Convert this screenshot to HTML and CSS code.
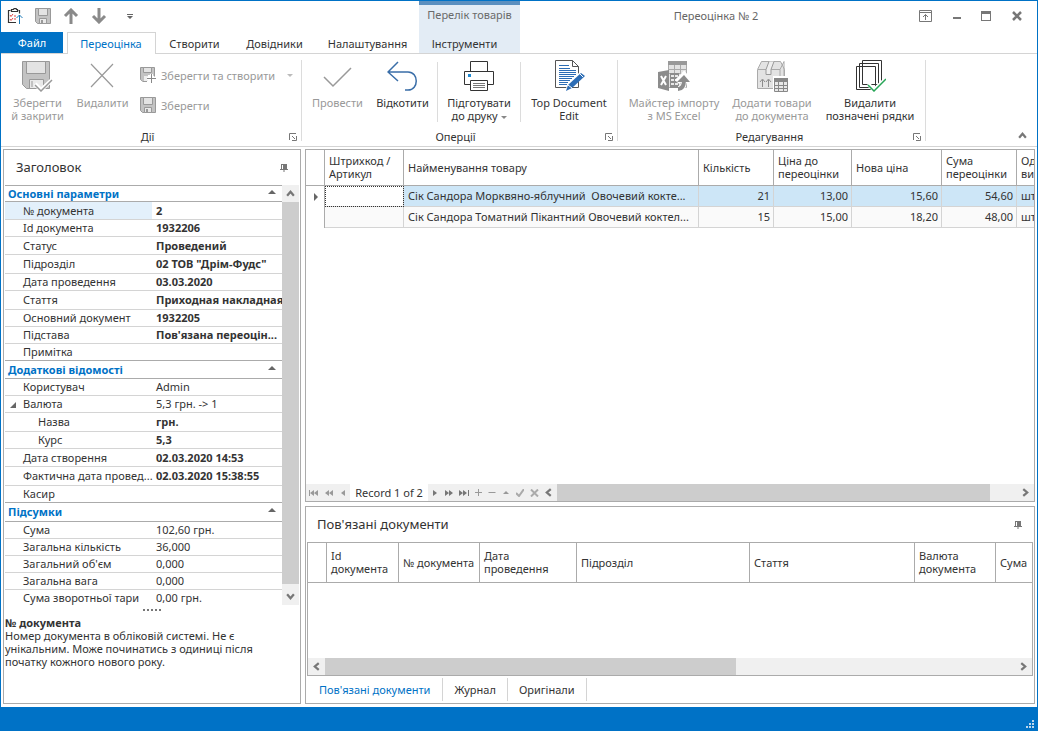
FILE: index.html
```html
<!DOCTYPE html>
<html lang="uk">
<head>
<meta charset="utf-8">
<title>Переоцінка № 2</title>
<link rel="stylesheet" href="styles.css">
</head>
<body>
<svg class="defs" aria-hidden="true">
  <symbol id="launcher" viewBox="0 0 8 8"><path d="M.5 7V.5H7M3 3l3 3M7.500 3v4.500H3" fill="none" stroke="#777"/></symbol>
  <symbol id="pin" viewBox="0 0 8 8"><path d="M1 0h6v5h1v1H4.500v2h-1V6H0V5h1zM2 1v4h1V1z" fill="#777" fill-rule="evenodd"/></symbol>
  <symbol id="floppy" viewBox="0 0 16 16"><path d="M.5.5h15v15h-13l-2-2z" fill="#c3c3c3" stroke="#999"/><path d="M3.500.500h9v7h-9z" fill="#e3e3e3" stroke="#999"/><path d="M4.500 10.500h7v5h-7z" fill="#e9e9e9" stroke="#999"/><path d="M6 12h2v3H6z" fill="#999"/></symbol>
  <symbol id="left" viewBox="0 0 8 8"><path d="M6 1L2.500 4 6 7" fill="none" stroke="#777" stroke-width="2"/></symbol>
  <symbol id="right" viewBox="0 0 8 8"><path d="M2 1l3.500 3L2 7" fill="none" stroke="#777" stroke-width="2"/></symbol>
  <symbol id="up" viewBox="0 0 8 8"><path d="M1 6l3-3.500L7 6" fill="none" stroke="#777" stroke-width="2"/></symbol>
  <symbol id="down" viewBox="0 0 8 8"><path d="M1 2l3 3.500L7 2" fill="none" stroke="#777" stroke-width="2"/></symbol>
</svg>
<div class="window">
  <header class="titlebar">
    <div class="quick">
      <button class="ib" aria-label="Документ"><svg width="16" height="16" viewBox="0 0 16 16"><path d="M9 14.500H1.500v-12h2m8 0h1v3M4.500 1.500h2c0-1.500 3-1.500 3 0h1v2h-6z" fill="none" stroke="#333" stroke-width="1.200"/><path d="M3 7l1 1.500L6 6M3 11l1 1.500L6 10M7 8h2M7 11h2" fill="none" stroke="#e04343"/><path d="M12.500 16V7M9.500 10l3-3 3 3" fill="none" stroke="#1e7bb8"/></svg></button>
      <button class="ib" aria-label="Зберегти документ"><svg width="16" height="16"><use href="#floppy"/></svg></button>
      <button class="ib" aria-label="Попередній"><svg width="16" height="16" viewBox="0 0 16 16"><path d="M8 16V3M2 8l6-6 6 6" fill="none" stroke="#8a8a8a" stroke-width="3"/></svg></button>
      <button class="ib" aria-label="Наступний"><svg width="16" height="16" viewBox="0 0 16 16"><path d="M8 0v13M2 8l6 6 6-6" fill="none" stroke="#8a8a8a" stroke-width="3"/></svg></button>
      <button class="ib more" aria-label="Налаштувати панель"><svg width="6" height="5" viewBox="0 0 6 5"><path d="M0 0h6v1H0zM0 2h6L3 5z" fill="#666"/></svg></button>
    </div>
    <div class="context">Перелік товарів</div>
    <h1 class="title">Переоцінка № 2</h1>
    <div class="sys">
      <button class="ib" aria-label="Параметри стрічки"><svg width="13" height="12" viewBox="0 0 13 12"><path d="M.5.500h12v11H.500zM1 2.500h11M6.500 10V4.500M4 7l2.500-2.500L9 7" fill="none" stroke="#777"/></svg></button>
      <button class="ib" aria-label="Згорнути"><svg width="8" height="12" viewBox="0 0 8 12"><path d="M0 7h8v2H0z" fill="#777"/></svg></button>
      <button class="ib" aria-label="Розгорнути"><svg width="10" height="10" viewBox="0 0 10 10"><path d="M0 0h10v10H0zM1 3v6h8V3z" fill="#777" fill-rule="evenodd"/></svg></button>
      <button class="ib" aria-label="Закрити"><svg width="10" height="10" viewBox="0 0 10 10"><path d="M1 1l8 8M9 1L1 9" stroke="#777" stroke-width="2.500"/></svg></button>
    </div>
  </header>
  <nav class="tabs">
    <button class="tab file">Файл</button>
    <button class="tab active">Переоцінка</button>
    <button class="tab create">Створити</button>
    <button class="tab refs">Довідники</button>
    <button class="tab setup">Налаштування</button>
    <button class="tab tools">Інструменти</button>
  </nav>
  <section class="ribbon">
    <div class="group actions">
      <div class="cmds">
        <button class="big off w65"><svg width="32" height="32" viewBox="0 0 32 32"><path d="M.5 1.500h27v27h-23l-4-4z" fill="#c3c3c3" stroke="#999"/><path d="M4.500 1.500h19v12h-19z" fill="#e3e3e3" stroke="#999"/><path d="M7.500 19.500h14v9h-14z" fill="#e9e9e9" stroke="#999"/><path d="M10 21v6" stroke="#999"/><path d="M13 24l6 6 12-11" fill="none" stroke="#fff" stroke-width="4"/><path d="M13 25l6 6 11-11" fill="none" stroke="#999" stroke-width="1.500"/></svg><span>Зберегти<br>й закрити</span></button>
        <button class="big off w65"><svg width="32" height="32" viewBox="0 0 32 32"><path d="M4 4l22 23M26 4L4 27" stroke="#999" stroke-width="1.200"/></svg><span>Видалити</span></button>
        <div class="smalls">
          <button class="small off"><svg width="16" height="16" viewBox="0 0 16 16"><path d="M.5.500h14v9M7 14.500H3l-2.500-2V.500" fill="#c3c3c3" stroke="#999"/><path d="M1 1h13v7H8v6H3l-2-2z" fill="#c3c3c3"/><path d="M3.500.500h8v5h-8z" fill="#e3e3e3" stroke="#999"/><path d="M4 9h4v5H4z" fill="#eee"/><path d="M11.500 7v9M7 11.500h9" stroke="#fff" stroke-width="3"/><path d="M11.500 7v9M7 11.500h9" stroke="#888"/></svg><span>Зберегти та створити</span><i class="caret"></i></button>
          <button class="small off"><svg width="16" height="16"><use href="#floppy"/></svg><span>Зберегти</span></button>
        </div>
      </div>
      <div class="caption">Дії</div>
      <button class="ib launch" aria-label="Дії: параметри"><svg width="8" height="8"><use href="#launcher"/></svg></button>
    </div>
    <div class="group ops">
      <div class="cmds">
        <button class="big off w65"><svg width="32" height="32" viewBox="0 0 32 32"><path d="M2 17l9 9L29 8" fill="none" stroke="#999" stroke-width="1.500"/></svg><span>Провести</span></button>
        <button class="big w65"><svg width="32" height="32" viewBox="0 0 32 32"><path d="M11 2L1 12l10 9M1 12h20c11 0 11 18 0 18h-3" fill="none" stroke="#3a6ea8" stroke-width="1.500"/></svg><span>Відкотити</span></button>
        <hr class="sep wide">
        <button class="big w81"><svg width="32" height="32" viewBox="0 0 32 32"><path d="M7.500 1.500h17v10h-17zM1.500 11.500h29v13h-29z" fill="#fff" stroke="#333"/><path d="M5 14h3v3H5z" fill="#1e88d0"/><path d="M7.500 20.500h17v10h-17z" fill="#fff" stroke="#333"/><path d="M10 23.500h12M10 25.500h12M10 27.500h12" stroke="#777"/></svg><span>Підготувати<br>до друку <i class="caret"></i></span></button>
        <hr class="sep">
        <button class="big w95"><svg width="32" height="32" viewBox="0 0 32 32"><path d="M2.500.500h17l6 6v21h-23z" fill="#fff" stroke="#555"/><path d="M19.500.500v6h6" fill="none" stroke="#555"/><path d="M6 5.500h10M6 8.500h11M6 10.500h17M6 12.500h17M6 14.500h17M6 16.500h15M6 18.500h13M6 20.500h11M6 22.500h9M6 24.500h8" stroke="#2d6db5"/><path d="M12 31l3-8 13-12 4 4-13 12z" fill="#fff"/><path d="M13 31l2-6 13-12 4 3-13 12z" fill="#2d6db5"/><path d="M26 13l4 4M15 25l4 3" stroke="#fff"/></svg><span>Top Document<br>Edit</span></button>
      </div>
      <div class="caption">Оперції</div>
      <button class="ib launch" aria-label="Оперції: параметри"><svg width="8" height="8"><use href="#launcher"/></svg></button>
    </div>
    <div class="group edit">
      <div class="cmds">
        <button class="big off w98"><svg width="32" height="32" viewBox="0 0 32 32"><path d="M10.500 1.500h18v26h-18z" fill="#e3e3e3" stroke="#aaa"/><path d="M10 1h19v4H10z" fill="#999"/><path d="M11 9.500h18M11 13.500h18M16.500 5v22M22.500 5v22" stroke="#aaa"/><path d="M0 12l11-2v21L0 28z" fill="#8c8c8c"/><path d="M3 16l5 9M8 16l-5 9" stroke="#fff" stroke-width="2"/><path d="M12 13h9v15h-9z" fill="#8c8c8c"/><path d="M13 15h3v2h-3zM17 15h3v2h-3zM13 19h3v2h-3zM17 19h3v2h-3zM13 23h3v2h-3zM17 23h3v2h-3z" fill="#e8e8e8"/><path d="M20 29c5 0 6-4 6-12M19 22l7-7 6 7" fill="none" stroke="#fff" stroke-width="6"/><path d="M20 29c5 0 6-4 6-9" fill="none" stroke="#8c8c8c" stroke-width="4"/><path d="M19 22l7-7 6 7z" fill="#8c8c8c"/></svg><span>Майстер імпорту<br>з MS Excel</span></button>
        <button class="big off w98"><svg width="32" height="32" viewBox="0 0 32 32"><path d="M1.500 9.500l4-8h19l4 8v19h-27z" fill="#e3e3e3" stroke="#aaa"/><path d="M2 9.500h22l4-8v20l-4 7v-19" fill="none" stroke="#aaa"/><path d="M13 1.500l-3 8v5h5v-5l3-8" fill="#eee" stroke="#999"/><path d="M6.500 27v-7M4 22l2.500-3L9 22M12.500 27v-7M10 22l2.500-3 2.500 3" fill="none" stroke="#8c8c8c"/><path d="M17 16h16v16H17z" fill="#fff"/><path d="M18.500 18.500h13v13h-13z" fill="#e8e8e8" stroke="#888"/><path d="M18 18h14v4H18z" fill="#888"/><path d="M18 25.500h14M18 28.500h14M22.500 21v11M27.500 21v11" stroke="#888"/></svg><span>Додати товари<br>до документа</span></button>
        <button class="big w98"><svg width="32" height="32" viewBox="0 0 32 32"><path d="M8.500.500h19v24h-19zM5.500 3.500h19v24h-19zM2.500 6.500h19v23h-19z" fill="#fff" stroke="#333"/><path d="M14 24l6 6 12-11" fill="none" stroke="#fff" stroke-width="4"/><path d="M14 25l6 6 12-12" fill="none" stroke="#27a557" stroke-width="1.500"/></svg><span>Видалити<br>позначені рядки</span></button>
      </div>
      <div class="caption">Редагування</div>
      <button class="ib launch" aria-label="Редагування: параметри"><svg width="8" height="8"><use href="#launcher"/></svg></button>
    </div>
    <button class="ib collapse" aria-label="Згорнути стрічку"><svg width="9" height="9"><use href="#up"/></svg></button>
  </section>
  <main class="work">
    <aside class="panel side">
      <div class="phead"><h2>Заголовок</h2><button class="ib" aria-label="Закріпити панель заголовка"><svg width="8" height="8"><use href="#pin"/></svg></button></div>
      <div class="props">
        <table class="ptable">
          <colgroup><col class="pname"><col></colgroup>
          <tbody>
          <tr class="cat first"><th colspan="2">Основні параметри<i class="tri"></i></th></tr>
          <tr class="mid sel"><th>№ документа</th><td><b>2</b></td></tr>
          <tr><th>Id документа</th><td><b>1932206</b></td></tr>
          <tr class="mid"><th>Статус</th><td><b>Проведений</b></td></tr>
          <tr class="tall"><th>Підрозділ</th><td><b>02 ТОВ "Дрім-Фудс"</b></td></tr>
          <tr><th>Дата проведення</th><td><b>03.03.2020</b></td></tr>
          <tr class="tall"><th>Стаття</th><td><b>Приходная накладная</b></td></tr>
          <tr><th>Основний документ</th><td><b>1932205</b></td></tr>
          <tr><th>Підстава</th><td><b>Пов'язана переоцін...</b></td></tr>
          <tr class="last"><th>Примітка</th><td></td></tr>
          <tr class="cat mid"><th colspan="2">Додаткові відомості<i class="tri"></i></th></tr>
          <tr><th>Користувач</th><td>Admin</td></tr>
          <tr class="parent"><th><i class="expand"></i>Валюта</th><td>5,3 грн. -&gt; 1</td></tr>
          <tr class="tall child"><th>Назва</th><td><b>грн.</b></td></tr>
          <tr class="child"><th>Курс</th><td><b>5,3</b></td></tr>
          <tr class="mid"><th>Дата створення</th><td><b>02.03.2020 14:53</b></td></tr>
          <tr class="tall"><th>Фактична дата провед...</th><td><b>02.03.2020 15:38:55</b></td></tr>
          <tr class="last"><th>Касир</th><td></td></tr>
          <tr class="cat tall"><th colspan="2">Підсумки<i class="tri"></i></th></tr>
          <tr><th>Сума</th><td>102,60 грн.</td></tr>
          <tr><th>Загальна кількість</th><td>36,000</td></tr>
          <tr><th>Загальний об'єм</th><td>0,000</td></tr>
          <tr><th>Загальна вага</th><td>0,000</td></tr>
          <tr class="end"><th>Сума зворотньої тари</th><td>0,00 грн.</td></tr>
          </tbody>
        </table>
        <div class="vbar"><button class="ib" aria-label="Вгору"><svg width="9" height="9"><use href="#up"/></svg></button><div class="thumb"></div><button class="ib low" aria-label="Вниз"><svg width="9" height="9"><use href="#down"/></svg></button></div>
      </div>
      <div class="dots"><i></i><i></i><i></i><i></i><i></i></div>
      <div class="desc"><b>№ документа</b><p>Номер документа в обліковій системі. Не є унікальним. Може починатись з одиниці після початку кожного нового року.</p></div>
    </aside>
    <div class="right">
      <section class="panel goods">
        <table class="grid">
          <colgroup><col class="c19"><col class="c79"><col><col class="c75"><col class="c78"><col class="c90"><col class="c75"><col class="c17"></colgroup>
          <thead><tr><th></th><th>Штрихкод / Артикул</th><th>Найменування товару</th><th>Кількість</th><th>Ціна до переоцінки</th><th>Нова ціна</th><th>Сума переоцінки</th><th class="cut">Од.<br>вим.</th></tr></thead>
          <tbody>
            <tr class="cur"><td class="ind"><i class="arrow"></i></td><td class="focus"></td><td class="pre">Сік Сандора Морквяно-яблучний  Овочевий кокте...</td><td class="num">21</td><td class="num">13,00</td><td class="num">15,60</td><td class="num">54,60</td><td class="cut">шт</td></tr>
            <tr><td class="ind"></td><td></td><td>Сік Сандора Томатний Пікантний Овочевий коктел...</td><td class="num">15</td><td class="num">15,00</td><td class="num">18,20</td><td class="num">48,00</td><td class="cut">шт</td></tr>
          </tbody>
        </table>
        <div class="navi">
          <div class="nbtns before">
            <button class="ib" aria-label="Перший"><svg width="10" height="8" viewBox="0 0 10 8"><path d="M0 1h1v6H0zM5 1v6L1 4zM9 1v6L5 4z" fill="#999"/></svg></button>
            <button class="ib" aria-label="Попередня сторінка"><svg width="8" height="8" viewBox="0 0 8 8"><path d="M4 1v6L0 4zM8 1v6L4 4z" fill="#999"/></svg></button>
            <button class="ib" aria-label="Попередній запис"><svg width="5" height="8" viewBox="0 0 5 8"><path d="M4 1v6L0 4z" fill="#999"/></svg></button>
          </div>
          <span class="rec">Record 1 of 2</span>
          <div class="nbtns after">
            <button class="ib" aria-label="Наступний запис"><svg width="8" height="8" viewBox="0 0 8 8"><path d="M2 1v6l4-3z" fill="#777"/></svg></button>
            <button class="ib" aria-label="Наступна сторінка"><svg width="8" height="8" viewBox="0 0 8 8"><path d="M0 1v6l4-3zM4 1v6l4-3z" fill="#777"/></svg></button>
            <button class="ib" aria-label="Останній"><svg width="10" height="8" viewBox="0 0 10 8"><path d="M0 1v6l4-3zM4 1v6l4-3zM9 1h1v6H9z" fill="#777"/></svg></button>
            <button class="ib" aria-label="Додати"><svg width="7" height="7" viewBox="0 0 7 7"><path d="M3.500 0v7M0 3.500h7" stroke="#999"/></svg></button>
            <button class="ib" aria-label="Вилучити"><svg width="8" height="8" viewBox="0 0 8 8"><path d="M.5 3.500h7" stroke="#999"/></svg></button>
            <button class="ib" aria-label="Редагувати"><svg width="8" height="8" viewBox="0 0 8 8"><path d="M1 5h6L4 2z" fill="#999"/></svg></button>
            <button class="ib" aria-label="Прийняти"><svg width="8" height="8" viewBox="0 0 8 8"><path d="M0 4l3 3 5-7" fill="none" stroke="#aaa" stroke-width="2"/></svg></button>
            <button class="ib" aria-label="Скасувати"><svg width="9" height="8" viewBox="0 0 9 8"><path d="M1 .500l7 7M8 .500l-7 7" stroke="#aaa" stroke-width="2"/></svg></button>
          </div>
          <div class="hbar"><button class="ib" aria-label="Ліворуч"><svg width="9" height="9"><use href="#left"/></svg></button><div class="thumb top"></div><div class="rest"></div><button class="ib" aria-label="Праворуч"><svg width="9" height="9"><use href="#right"/></svg></button></div>
        </div>
      </section>
      <section class="panel linked">
        <div class="phead lhead"><h2>Пов'язані документи</h2><button class="ib" aria-label="Закріпити пов'язані документи"><svg width="8" height="8"><use href="#pin"/></svg></button></div>
        <div class="inner">
          <table class="grid docs">
            <colgroup><col class="c19"><col class="c72"><col class="c81"><col class="c97"><col class="c173"><col><col class="c81"><col class="c36"></colgroup>
            <thead><tr><th></th><th>Id документа</th><th class="nw">№ документа</th><th>Дата проведення</th><th>Підрозділ</th><th>Стаття</th><th>Валюта документа</th><th class="cut">Сума</th></tr></thead>
          </table>
          <div class="hbar"><button class="ib" aria-label="Документи ліворуч"><svg width="9" height="9"><use href="#left"/></svg></button><div class="thumb bottom"></div><div class="rest"></div><button class="ib" aria-label="Документи праворуч"><svg width="9" height="9"><use href="#right"/></svg></button></div>
        </div>
        <div class="btabs"><button class="on">Пов'язані документи</button><button>Журнал</button><button>Оригінали</button></div>
      </section>
    </div>
  </main>
  <footer class="status"><svg width="8" height="8" viewBox="0 0 8 8"><path d="M6 0h2v2H6zM3 3h2v2H3zM6 3h2v2H6zM0 6h2v2H0zM3 6h2v2H3zM6 6h2v2H6z" fill="#bcd6ec"/></svg></footer>
</div>
</body>
</html>
```
FILE: styles.css
```css
* { box-sizing: border-box; }
body { margin: 0; color: #333; font: 11px/13px "Noto Sans", "Open Sans", sans-serif; }
button { font: inherit; color: inherit; background: none; border: 0; margin: 0; padding: 0; }
h1, h2, p { margin: 0; font: inherit; }
b { font-weight: 700; }
svg { display: block; flex: none; }
.defs { position: absolute; width: 0; height: 0; }
.window { display: flex; flex-direction: column; min-height: 100vh; border: 1px solid #0072c6; border-bottom: 0; background: #fff; }
.ib { display: flex; align-items: center; justify-content: center; }

.titlebar { display: flex; height: 31px; align-items: center; }
.quick { display: flex; align-items: center; gap: 12px; width: 418px; padding: 0 0 1px 6px; }
.more { margin-left: 8px; }
.context { width: 101px; height: 31px; padding-top: 3px; border-top: 4px solid #5b8fbf; background: #e3ecf5; text-align: center; color: #6a6a6a; }
.title { flex: 1; padding: 0 7px 2px 0; text-align: center; color: #666; }
.sys { display: flex; align-items: center; justify-content: space-between; width: 103px; margin-right: 15px; padding-bottom: 1px; }

.tabs { display: flex; height: 22px; border-bottom: 1px solid #d4d4d4; }
.tab { height: 21px; padding-top: 1px; text-align: center; }
.file { width: 62px; padding-top: 0; margin-right: 4px; background: #0072c6; color: #fff; }
.active { width: 89px; height: 22px; padding: 0 1px 1px 0; border: 1px solid #d4d4d4; border-bottom: 0; background: #fff; color: #0072c6; }
.create { width: 77px; }
.refs { width: 83px; }
.setup { width: 103px; }
.tools { width: 101px; padding-right: 10px; background: #e3ecf5; }

.ribbon { display: flex; height: 93px; padding-top: 6px; border-bottom: 1px solid #d4d4d4; }
.group { position: relative; display: flex; flex-direction: column; justify-content: space-between; height: 81px; border-right: 1px solid #dcdcdc; }
.actions { width: 301px; padding-left: 4px; }
.ops { width: 316px; padding-left: 3px; }
.edit { width: 308px; padding-left: 7px; }
.cmds { display: flex; }
.big { display: flex; flex-direction: column; align-items: center; gap: 4px; white-space: nowrap; }
.off { color: #999; }
.w65 { width: 65px; }
.w81 { width: 82px; }
.w95 { width: 96px; }
.w98 { width: 98px; }
.sep { width: 1px; height: 60px; margin: 2px 0 0; border: 0; background: #dcdcdc; }
.sep.wide { margin-left: 2px; }
.smalls { display: flex; flex-direction: column; gap: 14px; padding: 7px 0 0 5px; }
.small { display: flex; align-items: center; gap: 5px; height: 16px; white-space: nowrap; }
.caret { display: inline-block; border: 3px solid transparent; border-top-color: #888; border-bottom: 0; vertical-align: middle; }
.small .caret { margin-left: 7px; border-top-color: #bbb; }
.caption { text-align: center; padding-right: 11px; line-height: 8px; }
.launch { position: absolute; right: 4px; bottom: 0; }
.collapse { align-self: flex-end; margin: 0 10px 6px auto; }

.work { flex: 1; display: flex; gap: 4px; padding: 2px 2px 3px; }
.panel { display: flex; flex-direction: column; border: 1px solid #ababab; }
.side { width: 298px; }
.phead { display: flex; align-items: center; justify-content: space-between; height: 35px; padding: 0 12px; font-size: 13px; }
.props { display: flex; padding: 0 1px; }
.ptable { flex: 1; table-layout: fixed; width: 100px; border-collapse: collapse; border-top: 1px solid #ababab; }
.pname { width: 147px; }
.ptable th, .ptable td { height: 17px; padding: 0 0 1px 18px; border-bottom: 1px solid #d4d4d4; font-weight: 400; text-align: left; line-height: 13px; white-space: nowrap; }
.ptable td { padding: 0 0 1px 4px; }
.ptable .mid th, .ptable .mid td { height: 18px; }
.ptable .tall th, .ptable .tall td { height: 19px; padding-bottom: 2px; }
.ptable .cat th { padding: 0 6px 1px 3px; color: #0072c6; font-weight: 700; border-color: #ababab; }
.ptable .first th { height: 16px; }
.ptable .last th, .ptable .last td { border-color: #ababab; }
.ptable .end th, .ptable .end td { height: 15px; padding-bottom: 0; border: 0; }
.ptable .child th { padding-left: 33px; }
.ptable .parent th { padding-left: 5px; }
.sel th { background: #e3f0fb; }
.tri { float: right; margin-top: 3px; border: 4px solid transparent; border-top: 0; border-bottom-color: #666; }
.expand { display: inline-block; margin-right: 7px; border-left: 6px solid transparent; border-bottom: 6px solid #666; }
.vbar { display: flex; flex-direction: column; width: 17px; background: #f0f0f0; }
.vbar .ib { height: 17px; }
.vbar .low { height: 21px; padding-top: 4px; }
.vbar .thumb { flex: 1; }
.thumb { background: #cdcdcd; }
.dots { display: flex; gap: 2px; justify-content: center; padding: 4px 0 0; }
.dots i { width: 2px; height: 2px; background: #777; }
.desc { padding: 5px 30px 0 1px; }

.right { flex: 1; min-width: 0; display: flex; flex-direction: column; gap: 4px; }
.goods { flex: 1; }
.grid { width: 100%; table-layout: fixed; border-collapse: separate; border-spacing: 0; }
.c17 { width: 17px; } .c19 { width: 19px; } .c36 { width: 36px; } .c72 { width: 72px; } .c75 { width: 75px; } .c78 { width: 78px; }
.c79 { width: 79px; } .c81 { width: 81px; } .c90 { width: 90px; } .c97 { width: 97px; } .c173 { width: 173px; }
.grid th { height: 36px; padding: 0 4px 1px; border: solid #ababab; border-width: 0 1px 1px 0; text-align: left; font-weight: 400; }
.grid .cut { padding-right: 0; border-right: 0; overflow: hidden; white-space: nowrap; text-overflow: clip; }
.grid td { height: 21px; padding: 0 4px 2px; border: solid #d4d4d4; border-width: 0 1px 1px 0; background: #fafafa; white-space: nowrap; }
.grid .nw { white-space: nowrap; }
.grid .pre { white-space: pre; }
.grid .num { padding-right: 3px; text-align: right; }
.grid .cur td { background: #cde6f7; }
.grid .ind, .grid .cur .ind { background: #fff; padding: 0; border-right-color: #ababab; border-bottom: 0; }
.grid .cur .focus { background: #fff; outline: 1px dotted #333; outline-offset: -1px; }
.arrow { display: block; margin-left: 8px; width: 0; border: 4px solid transparent; border-left-color: #666; border-right: 0; }
.navi { display: flex; height: 17px; margin-top: auto; background: #f0f0f0; }
.nbtns { display: flex; align-items: center; }
.before { width: 44px; padding-left: 3px; gap: 6px; }
.before .ib:last-child { margin-left: 2px; }
.rec { width: 78px; background: #fff; text-align: center; line-height: 17px; }
.after { width: 112px; padding-left: 3px; gap: 6px; }
.hbar { flex: 1; display: flex; height: 17px; background: #f0f0f0; }
.hbar .ib { width: 17px; }
.thumb.top { flex: 433; }
.top + .rest { flex: 27; }
.thumb.bottom { flex: 411; }
.bottom + .rest { flex: 279; }
.linked { height: 198px; padding: 0 1px; }
.lhead { padding: 0 11px 0 10px; }
.inner { flex: 1; display: flex; flex-direction: column; border: 1px solid #ababab; }
.docs th { height: 40px; }
.inner .hbar { flex: none; margin-top: auto; }
.btabs { display: flex; height: 27px; padding: 2px 0; }
.btabs button { padding: 0 11px 1px; border-right: 1px solid #d4d4d4; }
.btabs .on { padding: 0 12px 1px; color: #0072c6; }

.status { display: flex; justify-content: flex-end; align-items: flex-end; height: 24px; padding: 3px; background: #0072c6; }
```
